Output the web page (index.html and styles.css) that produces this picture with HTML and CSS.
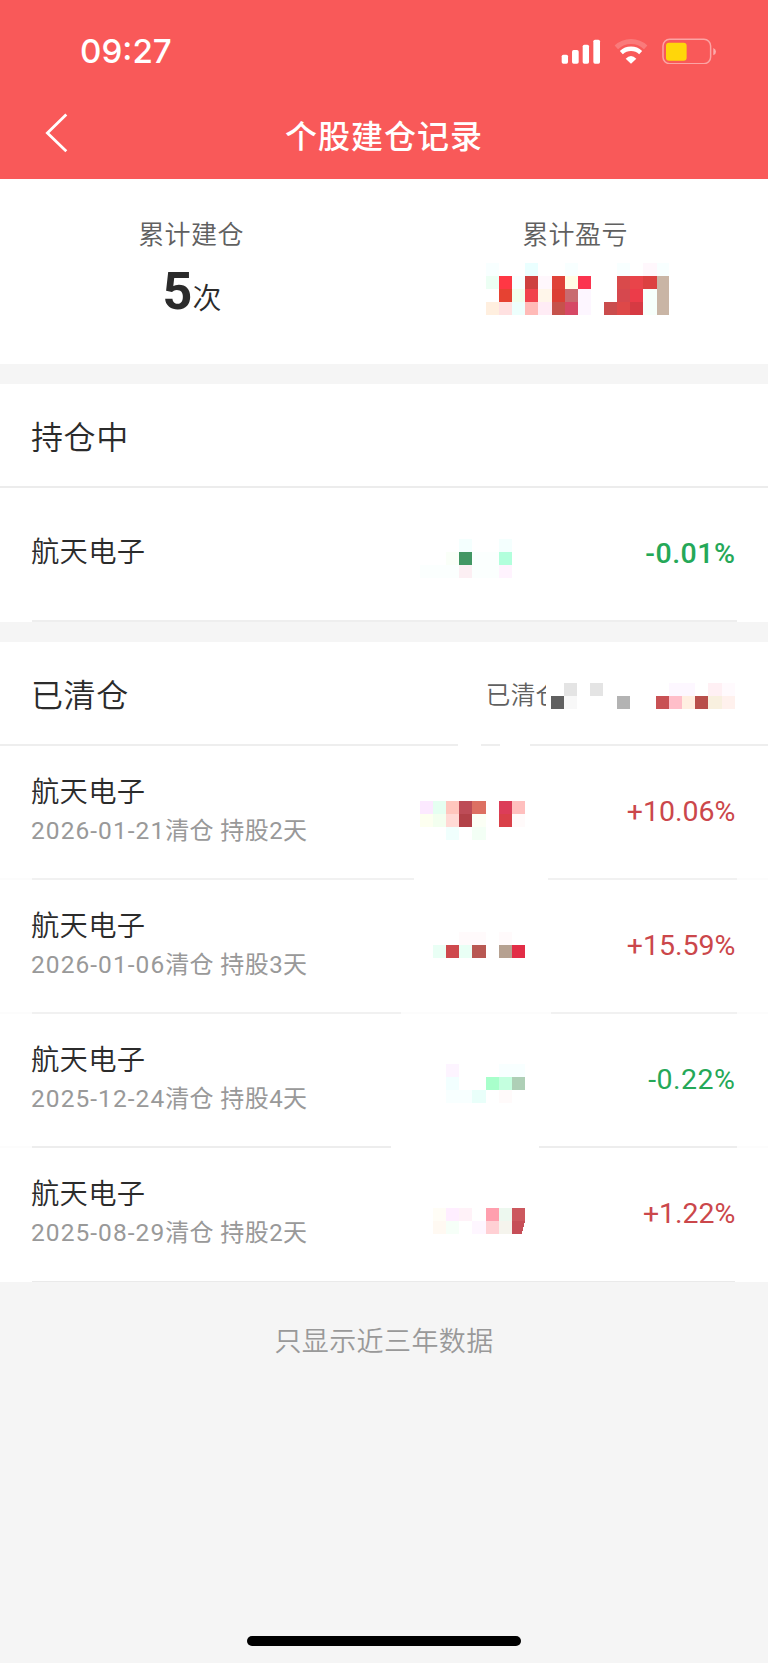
FILE: index.html
```html
<!DOCTYPE html>
<html lang="zh-CN">
<head>
<meta charset="utf-8">
<title>个股建仓记录</title>
<link rel="stylesheet" href="styles.css">
</head>
<body>
<div class="screen">
  <header class="top">
    <div class="status">
      <span class="clock">09:27</span>
      <svg class="status-icons" viewBox="531 112 468 80" width="156" height="26.67">
        <g fill="#fff">
          <rect x="533" y="162" width="19" height="27" rx="5"/>
          <rect x="564" y="148" width="20" height="41" rx="5"/>
          <rect x="596" y="132" width="19" height="57" rx="5"/>
          <rect x="628" y="117" width="20" height="72" rx="5"/>
          <path d="M741 189 L725 174 Q741 158 757 174 Z"/>
        </g>
        <g fill="none" stroke="#fff">
          <path d="M712 156 A42 42 0 0 1 770 156" stroke-width="13"/>
          <path d="M697 140 A64 64 0 0 1 785 140" stroke-width="15" opacity=".2"/>
          <rect x="837" y="116" width="143" height="73" rx="20" stroke-width="4.5" opacity=".45"/>
        </g>
        <rect x="846" y="126" width="62" height="54" rx="9" fill="#ffd60a"/>
        <path d="M988 142 Q996 145 996 153 T988 164 Z" fill="#fff" opacity=".5"/>
      </svg>
    </div>
    <div class="nav">
      <svg class="back" viewBox="0 0 24 40" width="24" height="40" fill="none" stroke="#fff" stroke-width="2.8"><path d="M21.3 1.6 L2.4 20 L21.3 38.2"/></svg>
      <h1 class="title">个股建仓记录</h1>
    </div>
  </header>

  <section class="summary">
    <div class="stat">
      <div class="stat-label">累计建仓</div>
      <div class="stat-value"><b class="count">5</b>次</div>
    </div>
    <div class="stat">
      <div class="stat-label">累计盈亏</div>
      <svg class="total-mask" viewBox="0 0 14 4" width="183.7" height="52.5" shape-rendering="crispEdges">
        <path fill="#eaffff" d="M3 0h1v1h-1z"/><path fill="#f8ffff" d="M0 0h1v1h-1zM2 1h1v1h-1zM6 0h1v1h-1zM10 0h1v1h-1zM13 0h1v1h-1z"/><path fill="#fff7fc" d="M4 1h1v1h-1zM12 0h1v1h-1z"/>
        <path fill="#ecfff4" d="M0 1h1v1h-1z"/><path fill="#ff3744" d="M1 1h1v1h-1z"/><path fill="#ce4040" d="M3 1h1v1h-1z"/><path fill="#e04238" d="M5 1h1v1h-1z"/><path fill="#fffde5" d="M6 1h1v1h-1z"/><path fill="#fb344f" d="M7 1h1v1h-1z"/>
        <path fill="#e64232" d="M1 2h1v1h-1z"/><path fill="#f1ffec" d="M2 2h1v1h-1z"/><path fill="#f1424c" d="M3 2h1v1h-1z"/><path fill="#fff6ea" d="M4 2h1v1h-1z"/><path fill="#dc3f34" d="M5 2h1v1h-1z"/><path fill="#c96a70" d="M6 2h1v1h-1z"/><path fill="#fdf6ff" d="M7 2h1v2h-1z"/>
        <path fill="#ffefdf" d="M0 3h1v1h-1z"/><path fill="#ffe1e1" d="M1 3h1v1h-1z"/><path fill="#edfffd" d="M2 3h1v1h-1z"/><path fill="#ffbab7" d="M3 3h1v1h-1z"/><path fill="#ffecf5" d="M4 3h1v1h-1z"/><path fill="#c6524b" d="M5 3h1v1h-1z"/><path fill="#d64865" d="M6 3h1v1h-1z"/>
        <path fill="#d94a4b" d="M10 1h1v1h-1z"/><path fill="#e9444a" d="M11 1h1v1h-1z"/><path fill="#dc4141" d="M12 1h1v1h-1z"/><path fill="#d6484e" d="M10 2h1v1h-1z"/><path fill="#ec3c49" d="M11 2h1v1h-1z"/><path fill="#f7fffb" d="M12 2h1v2h-1z"/><path fill="#ca4c4d" d="M9 3h1v1h-1z"/><path fill="#de4848" d="M10 3h1v1h-1z"/><path fill="#d63a43" d="M11 3h1v1h-1z"/><path fill="#c9b5a5" d="M13 1h1v3h-1z"/>
      </svg>
    </div>
  </section>

  <section class="group">
    <div class="group-head"><h2 class="group-title">持仓中</h2></div>
    <div class="row row-open line-open">
      <div class="name">航天电子</div>
      <svg class="mask" viewBox="0 0 105 133" width="105" height="133" shape-rendering="crispEdges"><g transform="translate(0 49.6) scale(13.12)">
        <path fill="#f4fffe" d="M3 0h1v1h-1zM6 0h1v1h-1z"/><path fill="#fbfffe" d="M4 1h2v1h-2zM0 2h3v1h-3zM4 2h2v1h-2z"/><path fill="#fafff8" d="M2 1h1v1h-1z"/><path fill="#429764" d="M3 1h1v1h-1z"/><path fill="#b2ffdc" d="M6 1h1v1h-1z"/><path fill="#fceff3" d="M3 2h1v1h-1z"/><path fill="#fff3fe" d="M6 2h1v1h-1z"/>
      </g></svg>
      <div class="pct down strong">-0.01%</div>
    </div>
  </section>

  <section class="group">
    <div class="group-head line-head">
      <h2 class="group-title">已清仓</h2>
      <div class="closed">
        <span class="closed-label">已清仓</span>
        <svg viewBox="0 0 14 4" width="183.7" height="52.5" shape-rendering="crispEdges">
          <path fill="#e4e4e4" d="M1 1h1v1h-1zM3 1h1v1h-1z"/><path fill="#606060" d="M0 2h1v1h-1z"/><path fill="#f8f8f8" d="M1 2h1v1h-1z"/><path fill="#b3b3b3" d="M5 2h1v1h-1z"/>
          <path fill="#fdf7ff" d="M9 1h2v1h-2z"/><path fill="#fff0f4" d="M12 1h1v1h-1z"/><path fill="#fffafd" d="M13 1h1v1h-1z"/>
          <path fill="#c85154" d="M8 2h1v1h-1z"/><path fill="#ffbec9" d="M9 2h1v1h-1z"/><path fill="#ffefe1" d="M10 2h1v1h-1z"/><path fill="#b84f4b" d="M11 2h1v1h-1z"/><path fill="#f8f0df" d="M12 2h1v1h-1z"/><path fill="#fff1ed" d="M13 2h1v1h-1z"/>
        </svg>
      </div>
    </div>
    <div class="row line-a">
      <div class="info"><div class="name">航天电子</div><div class="meta"><span class="date">2026-01-21</span>清仓 持股2天</div></div>
      <svg class="mask" viewBox="0 0 105 133" width="105" height="133" shape-rendering="crispEdges"><g transform="translate(0 53.9) scale(13.12)">
        <path fill="#fce9ff" d="M0 0h1v1h-1z"/><path fill="#e5fff1" d="M1 0h1v1h-1z"/><path fill="#ffc6bd" d="M2 0h1v1h-1z"/><path fill="#bd4c57" d="M3 0h1v1h-1z"/><path fill="#dd7062" d="M4 0h1v1h-1z"/><path fill="#dc3d59" d="M6 0h1v1h-1z"/><path fill="#ffbfbe" d="M7 0h1v1h-1z"/>
        <path fill="#fdfff0" d="M0 1h1v1h-1z"/><path fill="#f3ffef" d="M1 1h1v1h-1z"/><path fill="#ffdad5" d="M2 1h1v1h-1z"/><path fill="#b24148" d="M3 1h1v1h-1z"/><path fill="#fbfff5" d="M4 1h1v1h-1z"/><path fill="#d94049" d="M6 1h1v1h-1z"/><path fill="#fffafa" d="M7 1h1v1h-1z"/>
        <path fill="#f0fffd" d="M2 2h1v1h-1z"/><path fill="#f3fff5" d="M4 2h1v1h-1z"/>
      </g></svg>
      <div class="pct up">+10.06%</div>
    </div>
    <div class="row line-b">
      <div class="info"><div class="name">航天电子</div><div class="meta"><span class="date">2026-01-06</span>清仓 持股3天</div></div>
      <svg class="mask" viewBox="0 0 105 133" width="105" height="133" shape-rendering="crispEdges"><g transform="translate(0 51.1) scale(13.12)">
        <path fill="#fffafb" d="M3 0h2v1h-2zM6 0h1v1h-1z"/><path fill="#e9fff5" d="M1 1h1v1h-1zM3 1h1v1h-1z"/><path fill="#ce494d" d="M2 1h1v1h-1z"/><path fill="#b85852" d="M4 1h1v1h-1z"/><path fill="#b6a191" d="M6 1h1v1h-1z"/><path fill="#e22d46" d="M7 1h1v1h-1z"/>
      </g></svg>
      <div class="pct up">+15.59%</div>
    </div>
    <div class="row line-c">
      <div class="info"><div class="name">航天电子</div><div class="meta"><span class="date">2025-12-24</span>清仓 持股4天</div></div>
      <svg class="mask" viewBox="0 0 105 133" width="105" height="133" shape-rendering="crispEdges"><g transform="translate(0 48.8) scale(13.12)">
        <path fill="#fdf4ff" d="M2 0h1v1h-1z"/><path fill="#f8ffff" d="M6 0h2v1h-2zM2 2h2v1h-2z"/><path fill="#f2ffff" d="M2 1h1v1h-1z"/><path fill="#a8ffcb" d="M5 1h1v1h-1z"/><path fill="#c4ffdf" d="M6 1h1v1h-1z"/><path fill="#aecfb6" d="M7 1h1v1h-1z"/><path fill="#e9fffa" d="M4 2h1v1h-1z"/><path fill="#fffafa" d="M6 2h1v1h-1z"/>
      </g></svg>
      <div class="pct down">-0.22%</div>
    </div>
    <div class="row line-d">
      <div class="info"><div class="name">航天电子</div><div class="meta"><span class="date">2025-08-29</span>清仓 持股2天</div></div>
      <svg class="mask" viewBox="0 0 105 133" width="105" height="133" shape-rendering="crispEdges"><g transform="translate(0 58.9) scale(13.12)">
        <path fill="#fffdf6" d="M1 0h1v1h-1z"/><path fill="#ffeeff" d="M2 0h1v1h-1z"/><path fill="#fff2f8" d="M3 0h1v1h-1z"/><path fill="#ff9fae" d="M5 0h1v1h-1z"/><path fill="#edf8ef" d="M6 0h1v1h-1z"/><path fill="#cc585e" d="M7 0h1v1h-1z"/>
        <path fill="#fff9f2" d="M1 1h1v1h-1z"/><path fill="#f6fff8" d="M2 1h1v1h-1z"/><path fill="#fef6ff" d="M4 1h1v1h-1z"/><path fill="#ffd0d4" d="M5 1h1v1h-1z"/><path fill="#f5f4ed" d="M6 1h1v1h-1z"/><path fill="#c64e57" d="M7 1h1l-.25 1h-.75z"/>
      </g></svg>
      <div class="pct up">+1.22%</div>
    </div>
  </section>

  <footer class="foot">
    <p class="note">只显示近三年数据</p>
    <div class="home-bar"></div>
  </footer>
</div>
</body>
</html>
```
FILE: styles.css
```css
* { box-sizing: border-box; margin: 0; padding: 0; }
body { background: #f5f5f5; font-family: Roboto, "Noto Sans CJK SC", sans-serif; color: #2b2b2b; }
svg { display: block; flex: none; }
.screen { width: 768px; height: 1663px; display: flex; flex-direction: column; overflow: hidden; background: #f5f5f5; }

.top { height: 179px; flex: none; background: #f95959; color: #fff; }
.status { height: 102px; padding: 0 51px 0 80px; display: flex; align-items: center; justify-content: space-between; }
.clock { font: 500 33.2px/40px Inter, sans-serif; }
.nav { height: 77px; padding: 8px 0 0 45px; display: grid; grid-template-columns: 24px 1fr 69px; }
.back { margin-top: 2.5px; }
.title { font: 500 32px/48px "Noto Sans CJK SC", sans-serif; letter-spacing: 1px; text-align: center; height: 48px; }

.summary { height: 185px; flex: none; background: #fff; display: grid; grid-template-columns: 1fr 1fr; text-align: center; padding-top: 36px; }
.stat { display: flex; flex-direction: column; align-items: center; }
.stat-label { margin-left: -2px; font-size: 26px; line-height: 40px; font-weight: 350; letter-spacing: .4px; color: #606060; }
.stat-value { font-size: 29px; line-height: 60px; height: 60px; margin-top: 7px; font-weight: 350; }
.count { font-size: 52px; font-weight: 700; }
.total-mask { margin: 8px 0 0 3px; }

.group { margin-top: 20px; flex: none; background: #fff; }
.group-head { height: 104px; padding: 4px 33px 0 31px; display: flex; align-items: center; justify-content: space-between; background: linear-gradient(#ececec, #ececec) bottom / 100% 2px no-repeat; }
.group-title { font-size: 32px; line-height: 46px; font-weight: 350; letter-spacing: .6px; }
.closed { display: flex; align-items: center; gap: 5px; }
.closed-label { width: 60.5px; overflow: hidden; white-space: nowrap; font-size: 24.6px; line-height: 36px; font-weight: 350; letter-spacing: .3px; color: #606060; }

.row { height: 134px; padding: 0 32.5px 0 31px; display: grid; grid-template-columns: 389px 105px 1fr; align-items: center; }
.info { padding-bottom: 4px; }
.name { font-size: 28.3px; line-height: 40px; font-weight: 350; letter-spacing: .3px; }
.row-open .name { margin-top: -4px; }
.meta { font-size: 24px; line-height: 36px; font-weight: 400; letter-spacing: .4px; color: #999; }
.date { font-size: 24.5px; letter-spacing: 1.05px; }
.pct { font-size: 28.5px; line-height: 40px; text-align: right; padding-bottom: 2px; }
.up { color: #cb474b; }
.down { color: #25a858; letter-spacing: .5px; }
.strong { font-weight: 500; }

.line-open { background: linear-gradient(#eee, #eee) 32px 100% / 705px 2px no-repeat; }
.line-head { background: linear-gradient(90deg, #eee 458px, #fff 458px 481px, #eee 481px 500px, #fff 500px 530px, #eee 530px) bottom / 100% 2px no-repeat; }
.line-a { background: linear-gradient(90deg, #fcfcfc 32px, #f1f1f1 32px 414px, #fff 414px 548px, #f1f1f1 548px 737px, #fcfcfc 737px) bottom / 100% 2px no-repeat; }
.line-b { background: linear-gradient(90deg, #fcfcfc 32px, #f1f1f1 32px 401px, #fcfcfc 401px 551px, #f1f1f1 551px 737px, #fcfcfc 737px) bottom / 100% 2px no-repeat; }
.line-c { background: linear-gradient(90deg, #fcfcfc 32px, #ededed 32px 391px, #fff 391px 539px, #ededed 539px 737px, #fcfcfc 737px) bottom / 100% 2px no-repeat; }
.line-d { background: linear-gradient(#eaeaea, #eaeaea) 32px 100% / 703px 1px no-repeat; }

.foot { flex: 1; display: flex; flex-direction: column; align-items: center; justify-content: space-between; padding: 40px 0 17px; }
.note { font-size: 27px; line-height: 40px; font-weight: 350; letter-spacing: .4px; color: #999; }
.home-bar { width: 274px; height: 10px; border-radius: 5px; background: #000; }
```
